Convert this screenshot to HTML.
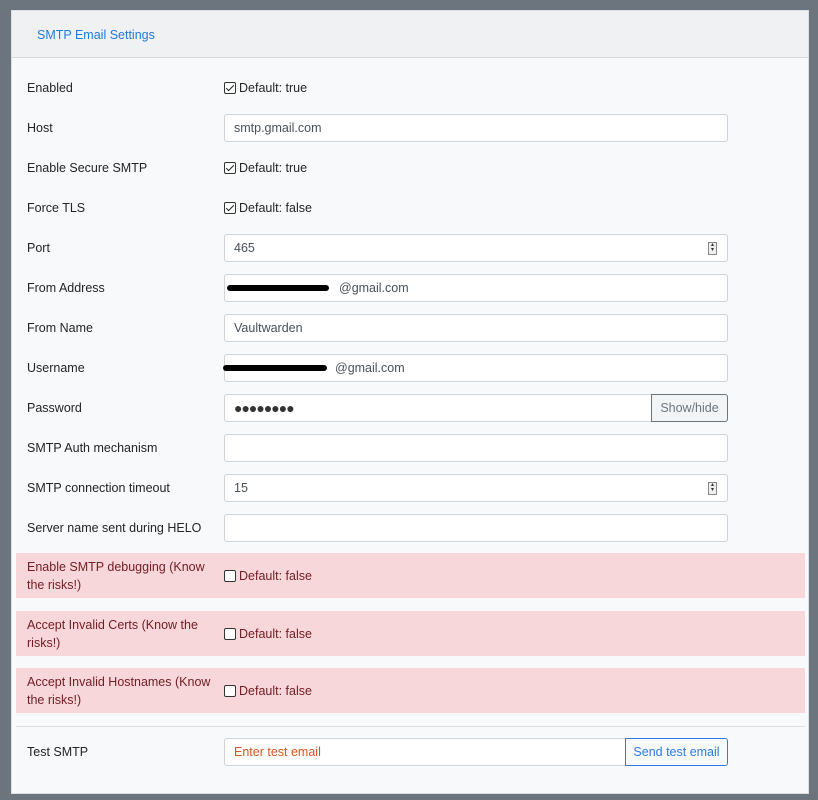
<!DOCTYPE html>
<html><head><style>
*{box-sizing:border-box;margin:0;padding:0}
body{width:818px;height:800px;background:#6c757d;font-family:"Liberation Sans",sans-serif;font-size:12.5px;color:#212529;position:relative;overflow:hidden}
.card{position:absolute;left:11px;top:10px;width:798px;height:784px;background:#f8f9fa;border:1px solid #dcdfe3}
.hdr{height:47px;background:#f0f1f3;border-bottom:1px solid #d6d9dd;color:#1f7ae0;padding:17px 0 0 25px;font-size:12.5px}
.row{position:absolute;left:0;width:796px;height:28px}
.lbl{position:absolute;left:15px;top:50%;transform:translateY(-50%);line-height:18px}
.inp{position:absolute;left:212px;top:0;width:504px;height:28px;background:#fff;border:1px solid #ced4da;border-radius:3px;padding:0 9px;line-height:26px;color:#495057}
.chk{position:absolute;left:212px;top:50%;transform:translateY(-50%);display:flex;align-items:center}
.box{width:12px;height:12px;border:1px solid #333;border-radius:2px;margin-right:3px;background:#fff;position:relative}
.box.c::after{content:"";position:absolute;left:3px;top:0px;width:3px;height:7px;border:solid #222;border-width:0 1.5px 1.5px 0;transform:rotate(45deg)}
.pink{position:absolute;left:4px;width:789px;height:45px;background:#f8d7da;color:#721c24}
.pink .lbl{left:11px;width:185px}
.pink .chk{left:208px;color:#721c24}
.red{position:absolute;left:10px;width:148px;height:6px;background:#000;border-radius:4px;top:10px}
.spin{position:absolute;right:10px;top:7px;width:9px;height:13px;border:1px solid #888;background:#eee;font-size:6px;line-height:5px;text-align:center;color:#333}
</style></head><body>
<div class="card">
<div class="hdr">SMTP Email Settings</div>
<div class="row" style="top:63px"><span class="lbl">Enabled</span><span class="chk"><span class="box c"></span>Default: true</span></div>
<div class="row" style="top:103px"><span class="lbl">Host</span><div class="inp">smtp.gmail.com</div></div>
<div class="row" style="top:143px"><span class="lbl">Enable Secure SMTP</span><span class="chk"><span class="box c"></span>Default: true</span></div>
<div class="row" style="top:183px"><span class="lbl">Force TLS</span><span class="chk"><span class="box c"></span>Default: false</span></div>
<div class="row" style="top:223px"><span class="lbl">Port</span><div class="inp">465<div class="spin">▴<br>▾</div></div></div>
<div class="row" style="top:263px"><span class="lbl">From Address</span><div class="inp" style="padding-left:114px">@gmail.com<div class="red" style="left:2px;width:102px"></div></div></div>
<div class="row" style="top:303px"><span class="lbl">From Name</span><div class="inp">Vaultwarden</div></div>
<div class="row" style="top:343px"><span class="lbl">Username</span><div class="inp" style="padding-left:110px">@gmail.com<div class="red" style="left:-2px;width:104px"></div></div></div>
<div class="row" style="top:383px"><span class="lbl">Password</span><div class="inp" style="font-size:14px;letter-spacing:-1px;color:#333">●●●●●●●●</div><div style="position:absolute;left:639px;top:0;width:77px;height:28px;border:1px solid #6c757d;border-radius:0 3px 3px 0;background:#f3f4f5;color:#6c757d;line-height:26px;text-align:center">Show/hide</div></div>
<div class="row" style="top:423px"><span class="lbl">SMTP Auth mechanism</span><div class="inp"></div></div>
<div class="row" style="top:463px"><span class="lbl">SMTP connection timeout</span><div class="inp">15<div class="spin">▴<br>▾</div></div></div>
<div class="row" style="top:503px"><span class="lbl">Server name sent during HELO</span><div class="inp"></div></div>
<div class="pink" style="top:542px"><span class="lbl">Enable SMTP debugging (Know the risks!)</span><span class="chk"><span class="box"></span>Default: false</span></div>
<div class="pink" style="top:600px"><span class="lbl">Accept Invalid Certs (Know the risks!)</span><span class="chk"><span class="box"></span>Default: false</span></div>
<div class="pink" style="top:657px"><span class="lbl">Accept Invalid Hostnames (Know the risks!)</span><span class="chk"><span class="box"></span>Default: false</span></div>
<div style="position:absolute;left:4px;top:715px;width:789px;height:1px;background:#dee2e6"></div>
<div class="row" style="top:727px"><span class="lbl">Test SMTP</span><div class="inp" style="width:402px;color:#d9531e;border-radius:3px 0 0 3px">Enter test email</div><div style="position:absolute;left:613px;top:0;width:103px;height:28px;border:1px solid #2c7be5;border-radius:0 3px 3px 0;color:#2c7be5;line-height:26px;text-align:center">Send test email</div></div>
</div>
</body></html>
